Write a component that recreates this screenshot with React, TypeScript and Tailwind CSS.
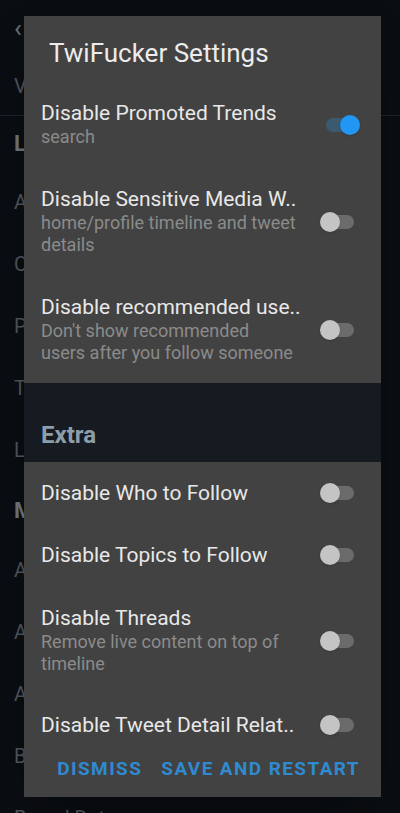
import React from "react";

type Pref = {
  title: string;
  summary?: string[];
  checked?: boolean;
};

const mainPrefs: Pref[] = [
  { title: "Disable Promoted Trends", summary: ["search"], checked: true },
  {
    title: "Disable Sensitive Media W..",
    summary: ["home/profile timeline and tweet", "details"],
  },
  {
    title: "Disable recommended use..",
    summary: ["Don't show recommended", "users after you follow someone"],
  },
];

const extraPrefs: Pref[] = [
  { title: "Disable Who to Follow" },
  { title: "Disable Topics to Follow" },
  { title: "Disable Threads", summary: ["Remove live content on top of", "timeline"] },
  { title: "Disable Tweet Detail Relat.." },
];

function Switch({ checked }: { checked?: boolean }) {
  return (
    <div className="relative h-[20px] w-[40px] shrink-0">
      <div
        className={
          checked
            ? "absolute left-[6px] top-[3px] h-[14px] w-[32px] rounded-full bg-[#3b5a70]"
            : "absolute left-[4px] top-[3px] h-[14px] w-[30px] rounded-full bg-[#6b6b6b]"
        }
      />
      <div
        className={
          checked
            ? "absolute left-[20px] top-0 h-[20px] w-[20px] rounded-full bg-[#2196f3] shadow"
            : "absolute left-0 top-0 h-[20px] w-[20px] rounded-full bg-[#c4c4c4] shadow"
        }
      />
    </div>
  );
}

function PrefRow({ pref }: { pref: Pref }) {
  const multi = !!pref.summary;
  return (
    <div
      className={
        multi
          ? "flex items-center justify-between pb-[19px] pl-[17px] pr-[21px] pt-[20px]"
          : "flex h-[62px] items-center justify-between pl-[17px] pr-[21px]"
      }
    >
      <div className="w-[268px]">
        <div className="whitespace-nowrap text-[21px] leading-[25px] text-[#e8e8e8]">
          {pref.title}
        </div>
        {pref.summary?.map((line) => (
          <div key={line} className="whitespace-nowrap text-[18px] leading-[22px] text-[#8b8b8b]">
            {line}
          </div>
        ))}
      </div>
      <Switch checked={pref.checked} />
    </div>
  );
}

const backItems = ["Version", "Layout", "Appearance", "Colors", "Privacy", "Timeline", "Language", "Misc", "About", "Accounts", "Advanced", "Backup", "Based Data"];

export default function App() {
  return (
    <div className="relative h-[813px] w-[400px] overflow-hidden bg-[#0a0d11] font-['Roboto',sans-serif]">
      {/* page behind the dialog */}
      <div className="text-[20px] text-[#4e545b]">
        <div className="flex h-[57px] items-center pl-[14px] text-[26px] text-[#6a7077]">‹</div>
        <div className="flex h-[59px] items-center border-b border-[#1c2229] pl-[14px]">{backItems[0]}</div>
        <div className="flex h-[55px] items-center pl-[14px] text-[22px] font-bold text-[#6d737a]">{backItems[1]}</div>
        {backItems.slice(2, 7).map((t) => (
          <div key={t} className="flex h-[62px] items-center pl-[14px]">{t}</div>
        ))}
        <div className="flex h-[58px] items-center pl-[14px] text-[22px] font-bold text-[#6d737a]">{backItems[7]}</div>
        {backItems.slice(8).map((t) => (
          <div key={t} className="flex h-[62px] items-center pl-[14px]">{t}</div>
        ))}
      </div>

      {/* dialog */}
      <div className="absolute left-[24px] top-[16px] flex h-[781px] w-[357px] flex-col bg-[#424242] shadow-2xl">
        <div className="h-[65px] pl-[25px] pt-[21px] text-[26px] leading-[32px] text-[#ececec]">
          TwiFucker Settings
        </div>
        <div className="flex-1 overflow-hidden">
          {mainPrefs.map((p) => (
            <PrefRow key={p.title} pref={p} />
          ))}
          <div className="flex h-[79px] items-end bg-[#161b21] pb-[13px] pl-[17px] text-[24px] font-bold leading-[28px] text-[#8d9eab]">
            Extra
          </div>
          {extraPrefs.map((p) => (
            <PrefRow key={p.title} pref={p} />
          ))}
        </div>
        <div className="flex h-[43px] items-start justify-end gap-[19px] pr-[21px] pt-[2px] text-[19px] font-bold leading-[26px] tracking-[1.4px] text-[#2f8ad0]">
          <span>DISMISS</span>
          <span>SAVE AND RESTART</span>
        </div>
      </div>
    </div>
  );
}
